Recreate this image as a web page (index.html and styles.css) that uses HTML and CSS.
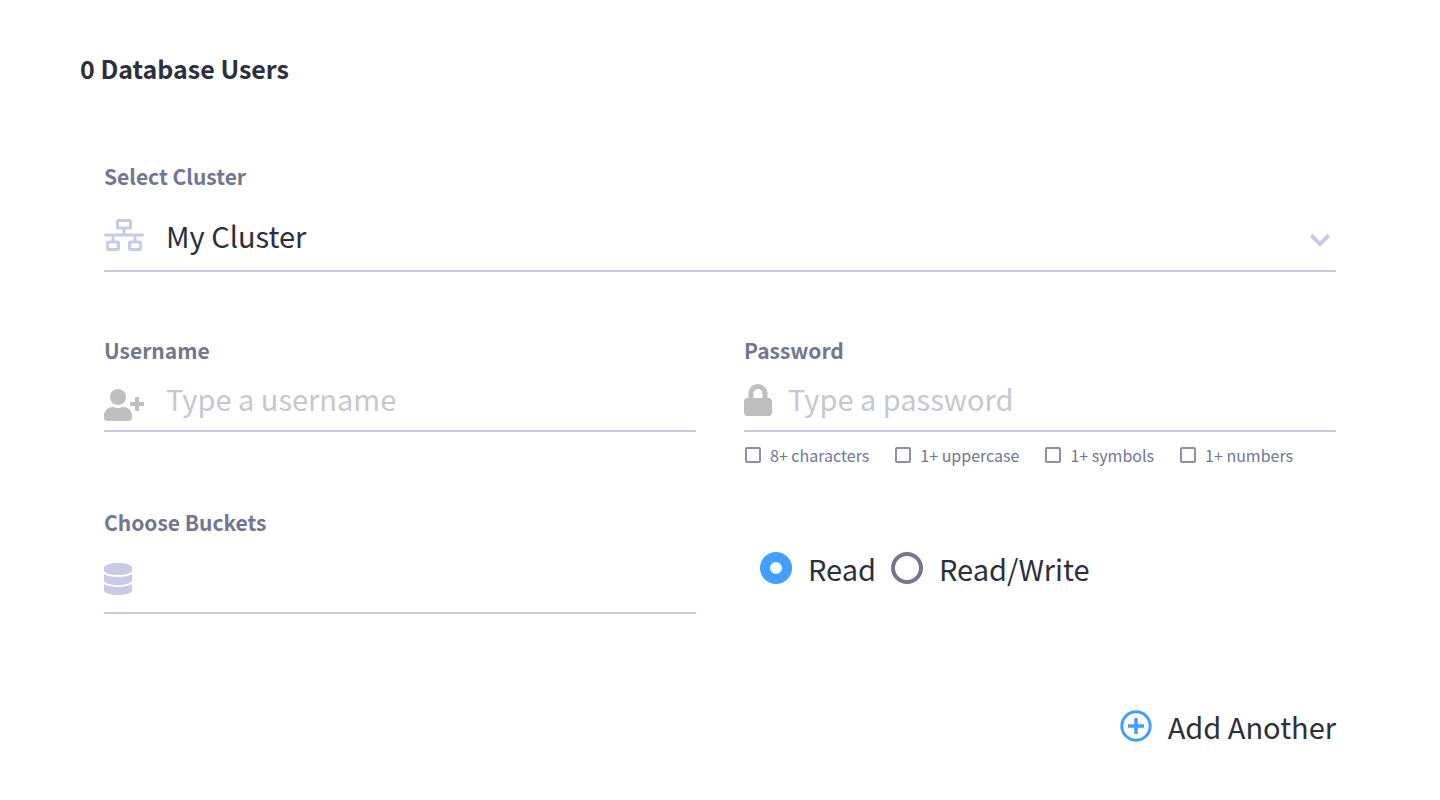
FILE: index.html
```html
<!DOCTYPE html>
<html lang="en">
<head>
<meta charset="utf-8">
<title>Database Users</title>
<link rel="stylesheet" href="styles.css">
</head>
<body>
<main class="page">
  <h1 class="title">0 Database Users</h1>
  <form class="form">
    <div class="field field-wide">
      <label class="label" for="cluster">Select Cluster</label>
      <div class="control control-select">
        <svg class="icon icon-wide" viewBox="0 0 40 32" fill="none" stroke="currentColor" stroke-width="3" aria-hidden="true">
          <rect x="13.5" y="1.5" width="13" height="7.5" rx="0.8"/>
          <rect x="3.5" y="23" width="11" height="7.500" rx="0.8"/>
          <rect x="25.5" y="23" width="11" height="7.500" rx="0.8"/>
          <path d="M1.500 16h37" stroke-linecap="round"/>
          <path d="M20 9v7M9 16v6M31 16v6"/>
        </svg>
        <select class="input" id="cluster"><option>My Cluster</option></select>
        <svg class="chevron" viewBox="0 0 20 13" fill="none" stroke="currentColor" stroke-width="3.8" aria-hidden="true"><path d="M1.300 1.300 10 10l8.700-8.700"/></svg>
      </div>
    </div>
    <div class="field">
      <label class="label" for="username">Username</label>
      <div class="control control-text">
        <svg class="icon icon-wide icon-gray icon-low" viewBox="0 0 640 512" fill="currentColor" aria-hidden="true"><path d="M624 208h-64v-64c0-8.800-7.200-16-16-16h-32c-8.800 0-16 7.200-16 16v64h-64c-8.800 0-16 7.200-16 16v32c0 8.800 7.200 16 16 16h64v64c0 8.800 7.200 16 16 16h32c8.800 0 16-7.200 16-16v-64h64c8.800 0 16-7.200 16-16v-32c0-8.800-7.200-16-16-16zm-400 48c70.700 0 128-57.300 128-128S294.700 0 224 0 96 57.300 96 128s57.300 128 128 128zm89.600 32h-16.700c-22.200 10.200-46.900 16-72.900 16s-50.600-5.800-72.900-16h-16.700C60.200 288 0 348.200 0 422.400V464c0 26.500 21.500 48 48 48h352c26.500 0 48-21.500 48-48v-41.600c0-74.200-60.200-134.400-134.400-134.400z"/></svg>
        <input class="input" id="username" type="text" placeholder="Type a username">
      </div>
    </div>
    <div class="field">
      <label class="label" for="password">Password</label>
      <div class="control control-text control-narrow">
        <svg class="icon icon-gray" viewBox="0 0 448 512" fill="currentColor" aria-hidden="true"><path d="M400 224h-24v-72C376 68.200 307.800 0 224 0S72 68.200 72 152v72H48c-26.500 0-48 21.500-48 48v192c0 26.500 21.500 48 48 48h352c26.500 0 48-21.500 48-48V272c0-26.500-21.500-48-48-48zm-104 0H152v-72c0-39.700 32.300-72 72-72s72 32.300 72 72v72z"/></svg>
        <input class="input" id="password" type="password" placeholder="Type a password">
      </div>
      <div class="rules">
        <label class="rule"><input class="check" type="checkbox">8+ characters</label>
        <label class="rule"><input class="check" type="checkbox">1+ uppercase</label>
        <label class="rule"><input class="check" type="checkbox">1+ symbols</label>
        <label class="rule"><input class="check" type="checkbox">1+ numbers</label>
      </div>
    </div>
    <div class="field field-buckets">
      <label class="label" for="buckets">Choose Buckets</label>
      <div class="control control-buckets">
        <svg class="icon" viewBox="0 0 448 512" fill="currentColor" aria-hidden="true"><path d="M448 73.143v45.714C448 159.143 347.667 192 224 192S0 159.143 0 118.857V73.143C0 32.857 100.333 0 224 0s224 32.857 224 73.143zM448 176v102.857C448 319.143 347.667 352 224 352S0 319.143 0 278.857V176c48.125 33.143 136.208 48.572 224 48.572S399.874 209.143 448 176zm0 160v102.857C448 479.143 347.667 512 224 512S0 479.143 0 438.857V336c48.125 33.143 136.208 48.572 224 48.572S399.874 369.143 448 336z"/></svg>
        <input class="input" id="buckets" type="text">
      </div>
    </div>
    <div class="access">
      <label class="option"><input class="radio" type="radio" name="access" checked>Read</label>
      <label class="option"><input class="radio" type="radio" name="access">Read/Write</label>
    </div>
  </form>
  <div class="actions">
    <button class="add" type="button">
      <svg class="add-icon" viewBox="0 0 32 32" fill="none" stroke="currentColor" stroke-width="3" aria-hidden="true"><circle cx="16" cy="16" r="14.200"/><path d="M16 8v16M8 16h16" stroke-width="3.500"/></svg>
      Add Another
    </button>
  </div>
</main>
</body>
</html>
```
FILE: styles.css
```css
* {
  box-sizing: border-box;
}

body {
  margin: 0;
  background: #fff;
  color: #2d2f3c;
  font-family: "Noto Sans CJK SC", "Noto Sans", sans-serif;
}

.page {
  padding: 48px 104px 48px 80px;
}

.title {
  margin: 0;
  font-size: 25px;
  line-height: 40px;
  font-weight: 600;
}

.form {
  display: grid;
  grid-template-columns: 1fr 1fr;
  column-gap: 48px;
  margin-top: 74px;
  padding-left: 24px;
}

.field-wide {
  grid-column: 1 / -1;
  margin-bottom: 64px;
}

.label {
  display: block;
  color: #747690;
  font-size: 21px;
  line-height: 28px;
  font-weight: 600;
}

.control {
  display: flex;
  align-items: center;
  gap: 22px;
  border-bottom: 2px solid #c9cae3;
  color: #c9cae3;
}

.control-select {
  height: 82px;
  padding: 10px 6px 0 0;
}

.control-text {
  height: 68px;
  padding-top: 2px;
}

.control-narrow {
  gap: 16px;
}

.control-buckets {
  height: 78px;
  padding-top: 10px;
}

.icon {
  flex: none;
  width: 28px;
  height: 32px;
}

.icon-wide {
  width: 40px;
}

.icon-gray {
  margin-top: 4px;
  color: #bfbfbf;
}

.icon-low {
  margin-top: 14px;
}

.chevron {
  flex: none;
  width: 20px;
  height: 13px;
  margin-top: 10px;
}

.input {
  flex: 1;
  min-width: 0;
  height: 44px;
  padding: 0;
  border: 0;
  outline: 0;
  appearance: none;
  background: transparent;
  color: #2d2f3c;
  font-family: inherit;
  font-size: 29px;
}

.input::placeholder {
  color: #c7c7d2;
  opacity: 1;
}

.rules {
  display: flex;
  gap: 25px;
  margin-top: 11px;
}

.rule {
  display: flex;
  align-items: center;
  gap: 9px;
  color: #747690;
  font-size: 16px;
  line-height: 24px;
  white-space: nowrap;
}

.check {
  appearance: none;
  width: 16px;
  height: 16px;
  margin: 0 0 0 1px;
  border: 2px solid #8d8fa4;
  border-radius: 2px;
}

.field-buckets {
  margin-top: 41px;
}

.access {
  display: flex;
  align-items: center;
  gap: 15px;
  padding: 54px 0 0 16px;
}

.option {
  display: flex;
  align-items: center;
  gap: 16px;
  font-size: 29px;
  line-height: 44px;
}

.radio {
  appearance: none;
  width: 32px;
  height: 32px;
  margin: 0;
  border: 4px solid #747690;
  border-radius: 50%;
}

.radio:checked {
  border: 10px solid #409fff;
}

.actions {
  display: flex;
  justify-content: flex-end;
  margin-top: 90px;
}

.add {
  display: flex;
  align-items: center;
  gap: 16px;
  padding: 0;
  border: 0;
  background: none;
  color: #2d2f3c;
  font-family: inherit;
  font-size: 29px;
  line-height: 44px;
}

.add-icon {
  width: 32px;
  height: 32px;
  color: #409fff;
}
```
